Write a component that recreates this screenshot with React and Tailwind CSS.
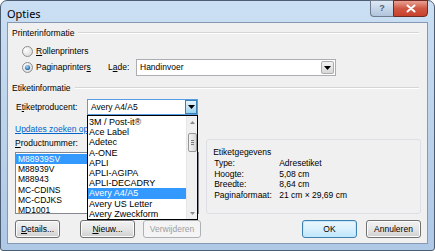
import React from 'react';

const font = { fontFamily: '"Liberation Sans", Arial, sans-serif' };

const Arrow = ({ className = '' }) => (
	<svg width="7" height="4" viewBox="0 0 7 4" className={className}>
		<path d="M0 0h7L3.5 4z" fill="#000" />
	</svg>
);

const Radio = ({ checked }) => (
	<svg width="11" height="11" viewBox="0 0 11 11" className="shrink-0">
		<defs>
			<radialGradient id={checked ? 'rg1' : 'rg0'} cx="0.35" cy="0.35" r="0.8">
				<stop offset="0" stopColor="#ffffff" />
				<stop offset="1" stopColor="#d4d4d4" />
			</radialGradient>
			<radialGradient id="dot" cx="0.4" cy="0.35" r="0.7">
				<stop offset="0" stopColor="#a8dcff" />
				<stop offset="1" stopColor="#1e5f96" />
			</radialGradient>
		</defs>
		<circle cx="5.5" cy="5.5" r="5" fill={`url(#${checked ? 'rg1' : 'rg0'})`} stroke="#8e8f8f" strokeWidth="1" />
		{checked && <circle cx="5.5" cy="5.5" r="2.6" fill="url(#dot)" />}
	</svg>
);

const Separator = () => (
	<div className="flex-1 ml-[4px] mr-[2px] border-t border-b border-t-[#d5d5d5] border-b-white h-[2px]" />
);

const Button = ({ children, className = '', disabled, primary }) => (
	<div
		className={`h-[18px] flex items-center justify-center rounded-[3px] border text-[8.5px] ${
			disabled
				? 'border-[#adb2b5] bg-[#f4f4f4] text-[#a0a0a0]'
				: primary
				? 'border-[#3c7fb1] bg-gradient-to-b from-[#eaf6fd] via-[#d9f0fc] to-[#bee6fd] text-black shadow-[inset_0_0_0_1px_#c5e9fb]'
				: 'border-[#707070] bg-gradient-to-b from-[#f2f2f2] via-[#e6e6e6] to-[#cfcfcf] text-black shadow-[inset_0_0_0_1px_#fcfcfc]'
		} ${className}`}
	>
		{children}
	</div>
);

const dropItems = [
	'3M / Post-it®',
	'Ace Label',
	'Adetec',
	'A-ONE',
	'APLI',
	'APLI-AGIPA',
	'APLI-DECADRY',
	'Avery A4/A5',
	'Avery US Letter',
	'Avery Zweckform',
];

const products = ['M88939SV', 'M88939V', 'M88943', 'MC-CDINS', 'MC-CDJKS', 'MD1001'];

const details = [
	['Type:', 'Adresetiket'],
	['Hoogte:', '5,08 cm'],
	['Breedte:', '8,64 cm'],
	['Paginaformaat:', '21 cm × 29,69 cm'],
];

export default function App() {
	return (
		<div className="w-[435px] h-[251px] bg-white text-black" style={font}>
			<div className="w-[435px] h-[251px] rounded-t-[7px] rounded-b-[3px] border border-[#4d5e73] bg-gradient-to-b from-[#cbdff4] via-[#bcd3ec] to-[#aec8e6] flex flex-col px-[6px] pb-[6px]">
				{/* Title bar */}
				<div className="h-[21px] flex items-start shrink-0">
					<span className="mt-[5px] text-[11px] text-black" style={{ fontFamily: '"Noto Sans", "Open Sans", sans-serif' }}>
						Opties
					</span>
					<div className="ml-auto flex -mt-px">
						<div className="w-[23px] h-[17px] rounded-bl-[4px] border border-[#6d7b8d] border-r-0 bg-gradient-to-b from-[#dfe8f3] via-[#c6d6e8] to-[#b0c4dc] flex items-center justify-center">
							<span className="text-[9px] font-bold text-[#4d6178] leading-none">?</span>
						</div>
						<div className="w-[35px] h-[17px] rounded-br-[4px] border border-[#6b2b24] bg-gradient-to-b from-[#e8a093] via-[#cf5744] to-[#c7402c] flex items-center justify-center">
							<svg width="10" height="9" viewBox="0 0 10 9">
								<path d="M1.5 1.5l7 6M8.5 1.5l-7 6" stroke="#fff" strokeWidth="2" strokeLinecap="round" />
							</svg>
						</div>
					</div>
				</div>

				{/* Client area */}
				<div className="flex-1 border border-[#8599b4] bg-[#f0f0f0] flex flex-col pl-[4px] pr-[6px] text-[8.5px]">
					{/* Printerinformatie */}
					<div className="mt-[3px] h-[14px] flex items-center">
						<span>Printerinformatie</span>
						<Separator />
					</div>
					<div className="mt-[4px] h-[14px] flex items-center pl-[10px] gap-[2px]">
						<Radio />
						<span className="ml-[1px]">
							<span className="underline">R</span>ollenprinters
						</span>
					</div>
					<div className="mt-px h-[17px] flex items-center pl-[10px]">
						<Radio checked />
						<span className="ml-[3px] w-[72px]">
							Paginaprinter<span className="underline">s</span>
						</span>
						<span className="w-[28px]">
							L<span className="underline">a</span>de:
						</span>
						<div className="w-[200px] h-[17px] border border-[#abadb3] bg-white flex items-center">
							<span className="pl-[3px] flex-1">Handinvoer</span>
							<div className="w-[13px] h-[13px] mr-px rounded-[2px] border border-[#acacac] bg-gradient-to-b from-[#f2f2f2] to-[#d8d8d8] flex items-center justify-center">
								<Arrow />
							</div>
						</div>
					</div>

					{/* Etiketinformatie */}
					<div className="mt-[5px] h-[14px] flex items-center">
						<span>Etiketinformatie</span>
						<Separator />
					</div>
					<div className="mt-[4px] h-[16px] flex items-center pl-[4px]">
						<span className="w-[71px]">
							E<span className="underline">t</span>iketproducent:
						</span>
						<div className="relative w-[111px] h-[16px] border border-[#569de5] bg-white flex items-center">
							<span className="pl-[3px] flex-1">Avery A4/A5</span>
							<div className="w-[12px] h-[14px] border border-[#3c7fb1] bg-gradient-to-b from-[#e5f4fc] via-[#c4e5f6] to-[#98d1ef] flex items-center justify-center">
								<Arrow />
							</div>

							{/* Dropdown list */}
							<div className="absolute left-[-1px] top-[15px] w-[111px] h-[105px] z-10 border border-black bg-white flex">
								<div className="flex-1 pt-px">
									{dropItems.map((item) => (
										<div
											key={item}
											className={`h-[10.2px] leading-[10.2px] pl-px text-[9px] whitespace-nowrap ${
												item === 'Avery A4/A5' ? 'bg-[#3399ff] text-white' : ''
											}`}
										>
											{item}
										</div>
									))}
								</div>
								<div className="w-[11px] bg-[#f0f0f0] border-l border-[#e6e6e6] flex flex-col items-center">
									<div className="h-[12px] flex items-center">
										<svg width="5" height="3" viewBox="0 0 5 3">
											<path d="M0 3L2.5 0 5 3z" fill="#8a8a8a" />
										</svg>
									</div>
									<div className="mt-[5px] w-[9px] h-[19px] rounded-[2px] border border-[#979797] bg-gradient-to-r from-[#f4f4f4] to-[#d8d8d8] flex flex-col items-center justify-center gap-px">
										<div className="w-[3px] h-px bg-[#7c7c7c]" />
										<div className="w-[3px] h-px bg-[#7c7c7c]" />
										<div className="w-[3px] h-px bg-[#7c7c7c]" />
									</div>
									<div className="mt-auto h-[12px] flex items-center">
										<svg width="5" height="3" viewBox="0 0 5 3">
											<path d="M0 0h5L2.5 3z" fill="#8a8a8a" />
										</svg>
									</div>
								</div>
							</div>
						</div>
					</div>

					{/* Product area */}
					<div className="flex">
						<div className="w-[187px] ml-[3px] flex flex-col">
							{/* link is partly hidden behind the open dropdown */}
							<div className="mt-[8px] h-[12px] w-[75px] flex items-center overflow-hidden">
								<span className="text-[#0066cc] underline whitespace-nowrap">Updates zoeken op Office.com</span>
							</div>
							<div className="mt-[2px] h-[12px] flex items-center">
								<span>
									<span className="underline">P</span>roductnummer:
								</span>
							</div>
							<div className="mt-[3px] h-[62px] border border-[#828790] bg-white pt-px overflow-hidden">
								{products.map((p, i) => (
									<div
										key={p}
										className={`h-[10.2px] leading-[10.2px] pl-[2px] mr-px ${
											i === 0 ? 'bg-[#3399ff] text-white' : ''
										}`}
									>
										{p}
									</div>
								))}
							</div>
						</div>

						<div className="ml-[7px] mt-[24px] w-[218px] h-[75px] rounded-[3px] border border-[#dcdfe3] pl-[6px] pt-[7px]">
							<div className="h-[10px] flex items-center">Etiketgegevens</div>
							<div className="mt-px">
								{details.map(([k, v]) => (
									<div key={k} className="h-[10.7px] flex items-center pl-px">
										<span className="w-[65px]">{k}</span>
										<span>{v}</span>
									</div>
								))}
							</div>
						</div>
					</div>

					{/* Buttons */}
					<div className="mt-[6px] flex items-center pl-[3px]">
						<Button className="w-[45px]">
							<span className="underline">D</span>etails...
						</Button>
						<Button className="w-[55px] ml-[20px]">
							<span className="underline">N</span>ieuw...
						</Button>
						<Button className="w-[58px] ml-[8px]" disabled>
							Verwijderen
						</Button>
						<Button className="w-[55px] ml-auto" primary>
							OK
						</Button>
						<Button className="w-[55px] ml-[9px]">Annuleren</Button>
					</div>
				</div>
			</div>
		</div>
	);
}
